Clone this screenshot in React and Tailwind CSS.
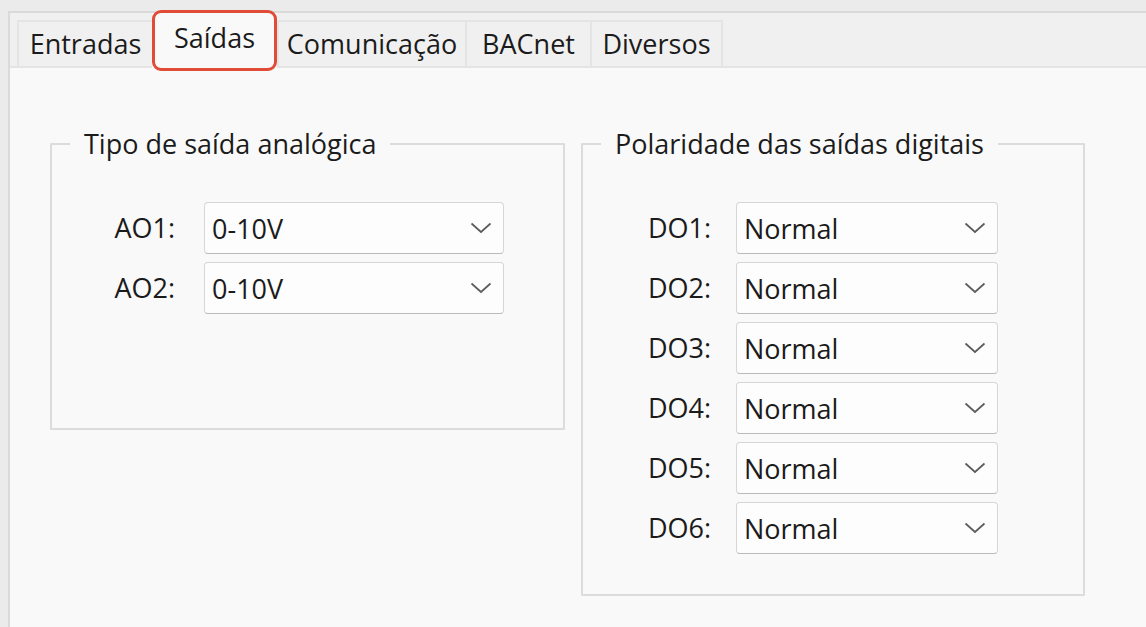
import React from "react";

const font = { fontFamily: '"Open Sans", "Noto Sans", sans-serif' };

function Chevron() {
  return (
    <svg width="22" height="12" viewBox="0 0 22 12" fill="none">
      <polyline points="1.5,1.5 11,10 20.5,1.5" stroke="#5c5c5c" strokeWidth="1.7" />
    </svg>
  );
}

function Select({ value, width }) {
  return (
    <div
      className={`flex h-[52px] items-center justify-between rounded-[4px] border border-[#d6d6d6] border-b-[#b9b9b9] bg-[#fdfdfd] pl-[7px] pr-[11px] text-[#1b1b1b] ${width}`}
    >
      <span className="leading-none">{value}</span>
      <Chevron />
    </div>
  );
}

function Row({ label, value, labelWidth, gap, width }) {
  return (
    <div className="flex items-center" style={{ gap }}>
      <div className={`text-right text-[#1b1b1b] ${labelWidth}`}>{label}</div>
      <Select value={value} width={width} />
    </div>
  );
}

function Group({ title, children, className }) {
  return (
    <fieldset className={`rounded-[1px] border-2 border-[#dcdcdc] ${className}`}>
      <legend className="ml-[18px] px-[14px] leading-[34px] text-[#1b1b1b]">{title}</legend>
      {children}
    </fieldset>
  );
}

export default function App() {
  const tabs = [
    { name: "Entradas", w: "w-[135px]" },
    { name: "Saídas", w: "w-[125px]", active: true },
    { name: "Comunicação", w: "w-[188px]" },
    { name: "BACnet", w: "w-[125px]" },
    { name: "Diversos", w: "w-[133px]" },
  ];
  const outputs = ["DO1:", "DO2:", "DO3:", "DO4:", "DO5:", "DO6:"];

  return (
    <div
      className="h-[627px] w-[1146px] overflow-hidden bg-[#ebebeb] pl-[8px] pt-[11px] text-[27px]"
      style={font}
    >
      <div className="flex h-full flex-col border-l-2 border-t-2 border-[#dadada]">
        <div className="flex h-[55px] items-end border-b-2 border-[#e4e4e4] bg-[#f0f0f0] pl-[7px]">
          {tabs.map((t) =>
            t.active ? (
              <div
                key={t.name}
                className={`relative -mb-[2px] flex h-[55px] items-start justify-center bg-[#f9f9f9] pt-[8px] text-[#1b1b1b] ${t.w}`}
              >
                <span className="leading-[34px]">{t.name}</span>
                <div className="pointer-events-none absolute -top-[3px] -bottom-[3px] left-0 right-0 rounded-[9px] border-[3px] border-[#e14c38]" />
              </div>
            ) : (
              <div
                key={t.name}
                className={`flex h-[46px] items-start justify-center border-l-2 border-r-0 border-t-2 border-[#e4e4e4] bg-[#f0f0f0] pt-[5px] text-[#1b1b1b] last:border-r-2 ${t.w}`}
              >
                <span className="leading-[34px]">{t.name}</span>
              </div>
            )
          )}
        </div>

        <div className="flex flex-1 items-start gap-[16px] bg-[#f9f9f9] pl-[40px] pt-[59px]">
          <Group title="Tipo de saída analógica" className="h-[303px] w-[515px]">
            <div className="flex flex-col gap-[8px] pl-[40px] pt-[41px]">
              <Row label="AO1:" value="0-10V" labelWidth="w-[83px]" gap="29px" width="w-[300px]" />
              <Row label="AO2:" value="0-10V" labelWidth="w-[83px]" gap="29px" width="w-[300px]" />
            </div>
          </Group>

          <Group title="Polaridade das saídas digitais" className="h-[469px] w-[504px]">
            <div className="flex flex-col gap-[8px] pl-[40px] pt-[41px]">
              {outputs.map((o) => (
                <Row key={o} label={o} value="Normal" labelWidth="w-[88px]" gap="25px" width="w-[262px]" />
              ))}
            </div>
          </Group>
        </div>
      </div>
    </div>
  );
}
